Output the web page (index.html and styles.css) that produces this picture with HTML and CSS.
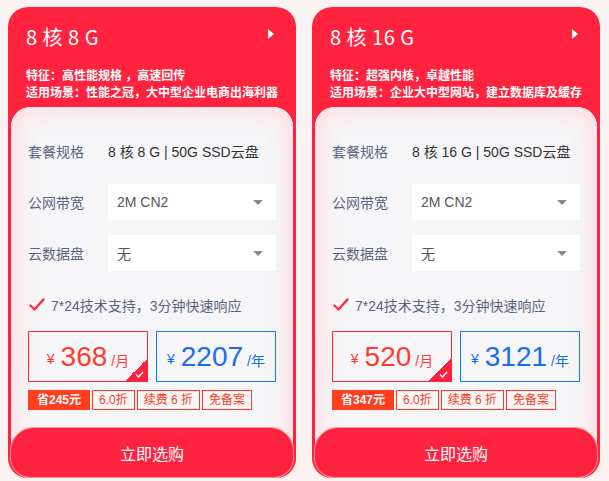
FILE: index.html
```html
<!DOCTYPE html>
<html lang="zh-CN">
<head>
    <meta charset="UTF-8">
    <title>云服务器套餐</title>
    <link rel="stylesheet" href="styles.css">
</head>
<body>
<div class="plans">
    <div class="card">
        <div class="head">
            <div class="title-row">
                <span class="title">8 核 8 G</span>
                <span class="arrow"></span>
            </div>
            <p class="desc">特征：高性能规格 ，高速回传</p>
            <p class="desc">适用场景：性能之冠，大中型企业电商出海利器</p>
        </div>
        <div class="panel">
            <div class="row">
                <span class="label">套餐规格</span>
                <span class="value">8 核 8 G | 50G SSD云盘</span>
            </div>
            <div class="row">
                <span class="label">公网带宽</span>
                <div class="select">2M CN2<span class="caret"></span></div>
            </div>
            <div class="row">
                <span class="label">云数据盘</span>
                <div class="select">无<span class="caret"></span></div>
            </div>
            <div class="support">
                <svg class="tick" width="16" height="14" viewBox="0 0 16 14"><path d="M1.5 7.5 L5.5 11.5 L14.5 1.5" fill="none" stroke="#ff2b3a" stroke-width="2.4" stroke-linecap="round" stroke-linejoin="round"/></svg>
                7*24技术支持，3分钟快速响应
            </div>
            <div class="prices">
                <div class="price month">
                    <span class="yen">¥</span><span class="num">368</span><span class="unit">/月</span>
                    <span class="corner"><svg width="9" height="7" viewBox="0 0 9 7"><path d="M1 3.5 L3.5 6 L8 1" fill="none" stroke="#fff" stroke-width="1.3"/></svg></span>
                </div>
                <div class="price year">
                    <span class="yen">¥</span><span class="num">2207</span><span class="unit">/年</span>
                </div>
            </div>
            <div class="tags">
                <span class="tag fill">省245元</span>
                <span class="tag">6.0折</span>
                <span class="tag">续费 6 折</span>
                <span class="tag">免备案</span>
            </div>
            <button class="buy">立即选购</button>
        </div>
    </div>

    <div class="card">
        <div class="head">
            <div class="title-row">
                <span class="title">8 核 16 G</span>
                <span class="arrow"></span>
            </div>
            <p class="desc">特征：超强内核，卓越性能</p>
            <p class="desc">适用场景：企业大中型网站，建立数据库及缓存</p>
        </div>
        <div class="panel">
            <div class="row">
                <span class="label">套餐规格</span>
                <span class="value">8 核 16 G | 50G SSD云盘</span>
            </div>
            <div class="row">
                <span class="label">公网带宽</span>
                <div class="select">2M CN2<span class="caret"></span></div>
            </div>
            <div class="row">
                <span class="label">云数据盘</span>
                <div class="select">无<span class="caret"></span></div>
            </div>
            <div class="support">
                <svg class="tick" width="16" height="14" viewBox="0 0 16 14"><path d="M1.5 7.5 L5.5 11.5 L14.5 1.5" fill="none" stroke="#ff2b3a" stroke-width="2.4" stroke-linecap="round" stroke-linejoin="round"/></svg>
                7*24技术支持，3分钟快速响应
            </div>
            <div class="prices">
                <div class="price month">
                    <span class="yen">¥</span><span class="num">520</span><span class="unit">/月</span>
                    <span class="corner"><svg width="9" height="7" viewBox="0 0 9 7"><path d="M1 3.5 L3.5 6 L8 1" fill="none" stroke="#fff" stroke-width="1.3"/></svg></span>
                </div>
                <div class="price year">
                    <span class="yen">¥</span><span class="num">3121</span><span class="unit">/年</span>
                </div>
            </div>
            <div class="tags">
                <span class="tag fill">省347元</span>
                <span class="tag">6.0折</span>
                <span class="tag">续费 6 折</span>
                <span class="tag">免备案</span>
            </div>
            <button class="buy">立即选购</button>
        </div>
    </div>
</div>
</body>
</html>
```

FILE: styles.css
```css
body {
    margin: 0;
    background: #fbf2f2;
    font-family: "Liberation Sans", "Noto Sans CJK SC", sans-serif;
}
.plans { display: flex; gap: 16px; padding: 7px 8px 3px 8px; }

.card {
    width: 288px;
    height: 471px;
    background: #ff2340;
    border-radius: 20px;
    display: flex;
    flex-direction: column;
    overflow: hidden;
}
.head { padding: 18px 18px 0 18px; color: #fff; height: 82px; }
.title-row { display: flex; justify-content: space-between; align-items: flex-start; }
.title { font-family: "Noto Sans CJK SC", sans-serif; font-weight: 400; font-size: 20px; line-height: 24px; letter-spacing: 0.5px; }
.arrow {
    margin-top: 4px;
    margin-right: 4px;
    width: 0; height: 0;
    border-top: 5px solid transparent;
    border-bottom: 5px solid transparent;
    border-left: 6px solid #fff;
}
.desc { margin: 0; font-size: 12px; line-height: 17px; font-weight: bold; }
.desc:first-of-type { margin-top: 19px; }

.panel {
    flex: 1;
    margin: 0 3px;
    border-radius: 20px;
    background: #f6f6f8;
    box-shadow: inset 0 0 24px 6px rgba(255, 220, 222, 0.9), inset 0 0 0 1px #ffe6e8;
    display: flex;
    flex-direction: column;
    padding: 26px 0 0 0;
    position: relative;
}
.row { display: flex; align-items: center; height: 36px; margin: 0 17px 15px 17px; font-size: 14px; }
.label { width: 80px; color: #5d6481; }
.value { color: #333; }
.select {
    flex: 1;
    height: 36px;
    background: #fff;
    display: flex;
    align-items: center;
    justify-content: space-between;
    padding: 0 13px 0 9px;
    color: #555;
}
.caret {
    width: 0; height: 0;
    border-left: 5px solid transparent;
    border-right: 5px solid transparent;
    border-top: 5px solid #888;
}
.support { display: flex; align-items: center; gap: 6px; margin: 10px 17px 0 18px; font-size: 14px; color: #5d6481; height: 18px; }

.prices { display: flex; gap: 8px; margin: 17px 17px 0 17px; }
.price {
    width: 120px;
    height: 51px;
    box-sizing: border-box;
    display: flex;
    align-items: center;
    justify-content: center;
    position: relative;
}
.month { border: 1px solid #ff2340; color: #ff3b2f; }
.year { border: 1px solid #1677ff; color: #1a6cf0; }
.yen { font-size: 14px; margin-right: 6px; margin-top: 4px; }
.num { font-size: 28px; line-height: 30px; }
.unit { font-size: 14px; margin-left: 4px; margin-top: 6px; }
.corner {
    position: absolute;
    right: 0; bottom: 0;
    width: 22px; height: 22px;
    background: linear-gradient(135deg, transparent 50%, #ff2340 50%);
}
.corner svg { position: absolute; right: 3px; bottom: 3px; }

.tags { display: flex; gap: 2px; margin: 8px 17px 0 17px; }
.tag {
    height: 20px;
    box-sizing: border-box;
    border: 1px solid #ff3d1f;
    color: #ff3d1f;
    font-size: 12px;
    line-height: 18px;
    padding: 0 6px;
}
.tag.fill { background: #ff3d1f; color: #fff; font-weight: bold; padding: 0 8px; }

.buy {
    margin-top: auto;
    margin-left: -1px;
    margin-right: -1px;
    height: 51px;
    border: 1px solid #ff8a98;
    border-radius: 24px 24px 20px 20px;
    background: #ff2340;
    color: #fff;
    font-size: 16px;
    font-family: "Noto Sans CJK SC", sans-serif;
}
```
